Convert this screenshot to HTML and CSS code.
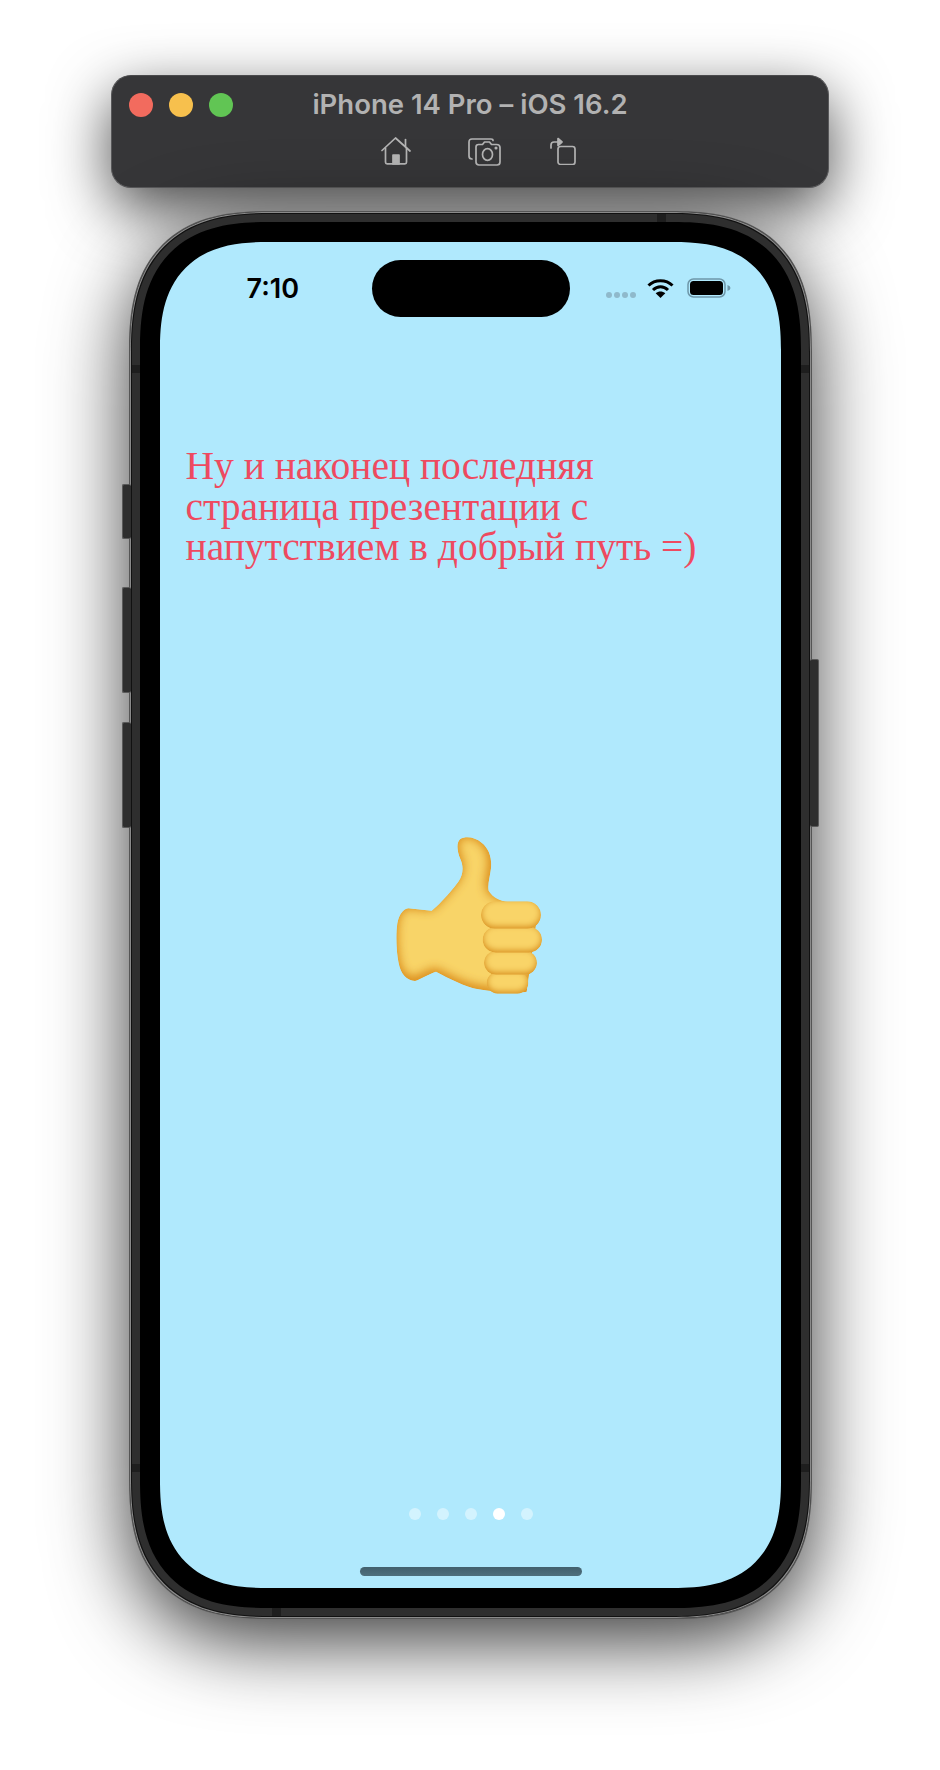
FILE: index.html
```html
<!DOCTYPE html>
<html lang="ru">
<head>
<meta charset="utf-8">
<title>iPhone 14 Pro – iOS 16.2</title>
<link rel="stylesheet" href="styles.css">
</head>
<body>
<div class="page">
  <header class="bar">
    <div class="bar-head">
      <div class="lights"><i class="light red"></i><i class="light yellow"></i><i class="light green"></i></div>
      <div class="bar-title">iPhone 14 Pro – iOS 16.2</div>
    </div>
    <div class="bar-tools">
      <svg class="tool-home" width="30" height="28" viewBox="0 0 30 28" fill="none" stroke="#b4b4b4" stroke-width="1.7" stroke-linecap="round" stroke-linejoin="round"><path d="M1 13.5 14.5 1 29 14"/><path d="M4.5 11v14.2q0 1.6 1.6 1.6h17.8q1.6 0 1.6-1.6V11"/><path d="M24.5 9.5V2.5"/><path d="M12 27v-9h6v9z" fill="#b4b4b4"/></svg>
      <svg class="tool-cam" width="33" height="28" viewBox="0 0 33 28" fill="none" stroke="#b4b4b4" stroke-width="1.7" stroke-linecap="round" stroke-linejoin="round"><path d="M25 2.5Q25 1 23 1H4Q1 1 1 4v14q0 3 3 3"/><path d="M8 9q0-2.500 2.500-2.500h4l2-2.500h5l2 2.500h5q3.500 0 3.500 3V24q0 3-3 3H11q-3 0-3-3z"/><ellipse cx="19.500" cy="16.500" rx="5" ry="5.800"/><circle cx="28" cy="10" r=".7" fill="#b4b4b4"/></svg>
      <svg class="tool-rot" width="26" height="28" viewBox="0 0 26 28" fill="none" stroke="#b4b4b4" stroke-width="1.7" stroke-linecap="round" stroke-linejoin="round"><rect x="8" y="9.500" width="17" height="18" rx="2.500"/><path d="M1 11V8q0-3 3-3h5"/><path d="M8 1.500 12 5l-4 3.500z" fill="#b4b4b4"/></svg>
    </div>
  </header>

  <div class="phone">
    <i class="btn btn-silent"></i>
    <i class="btn btn-up"></i>
    <i class="btn btn-down"></i>
    <i class="btn btn-power"></i>
    <i class="band band-top"></i>
    <i class="band band-bottom"></i>
    <i class="band band-lt"></i>
    <i class="band band-lb"></i>
    <i class="band band-rt"></i>
    <i class="band band-rb"></i>
    <div class="bezel">
      <main class="screen">
        <div class="island"></div>
        <div class="layer-top">
          <div class="status">
            <span class="time">7:10</span>
            <div class="status-right">
              <div class="signal"><i></i><i></i><i></i><i></i></div>
              <svg class="wifi" width="27" height="20" viewBox="0 0 27 20" fill="none" stroke="#000" stroke-width="3"><path d="M1.500 7.500C8 1 19 1 25.500 7.500"/><path d="M6 12c4.500-4.300 10.500-4.300 15 0"/><path d="M13.500 20 8.700 15.200c2.800-2.300 6.800-2.300 9.600 0z" fill="#000" stroke="none"/></svg>
              <svg class="battery" width="44" height="20" viewBox="0 0 44 20"><rect x="1" y="1" width="37" height="18" rx="5.500" fill="none" stroke="#6e97a9" stroke-width="1.500"/><rect x="3" y="3" width="33" height="14" rx="3.500" fill="#000"/><path d="M40.500 7q3 .8 3 3t-3 3z" fill="#6e97a9"/></svg>
            </div>
          </div>
          <h1 class="headline">Ну и наконец последняя страница презентации с напутствием в добрый путь =)</h1>
        </div>

        <svg class="thumb" width="180" height="180" viewBox="0 0 540 540">
          <defs>
            <filter id="shadeBig" x="-10%" y="-10%" width="120%" height="120%" color-interpolation-filters="sRGB">
              <feGaussianBlur in="SourceAlpha" stdDeviation="16"/>
              <feOffset dx="-2" dy="-7" result="soft"/>
              <feComposite in="SourceAlpha" in2="soft" operator="out" result="edge"/>
              <feFlood flood-color="#dd9322"/>
              <feComposite in2="edge" operator="in" result="tint"/>
              <feMerge result="all"><feMergeNode in="SourceGraphic"/><feMergeNode in="tint"/><feMergeNode in="tint"/></feMerge>
              <feComposite in="all" in2="SourceAlpha" operator="in"/>
            </filter>
            <filter id="shadeFinger" x="-10%" y="-20%" width="120%" height="140%" color-interpolation-filters="sRGB">
              <feGaussianBlur in="SourceAlpha" stdDeviation="10"/>
              <feOffset dy="-7" result="soft"/>
              <feComposite in="SourceAlpha" in2="soft" operator="out" result="edge"/>
              <feFlood flood-color="#d58a1a"/>
              <feComposite in2="edge" operator="in" result="tint"/>
              <feMerge result="all"><feMergeNode in="SourceGraphic"/><feMergeNode in="tint"/></feMerge>
              <feComposite in="all" in2="SourceAlpha" operator="in"/>
            </filter>
          </defs>
          <path filter="url(#shadeBig)" fill="#f8d468" d="M85 265 155 272C168 262 205 225 235 185 252 160 250 135 240 115 232 95 228 70 240 58 258 47 285 52 305 68 328 86 336 115 333 145 330 170 322 195 326 212 338 232 360 242 385 246L470 300 440 515C400 522 340 515 295 508 255 500 205 475 168 455 145 462 125 477 105 483 80 482 62 462 56 430 49 395 47 345 52 310 57 285 68 268 85 265Z"/>
          <rect filter="url(#shadeFinger)" fill="#f9d468" x="320" y="456" width="125" height="65" rx="32"/>
          <rect filter="url(#shadeFinger)" fill="#f9d468" x="312" y="392" width="159" height="72" rx="36"/>
          <rect filter="url(#shadeFinger)" fill="#f9d468" x="308" y="320" width="178" height="78" rx="39"/>
          <rect filter="url(#shadeFinger)" fill="#f9d468" x="303" y="244" width="180" height="82" rx="41"/>
        </svg>

        <div class="layer-bottom">
          <div class="dots"><i></i><i></i><i></i><i class="on"></i><i></i></div>
          <div class="home-bar"></div>
        </div>
      </main>
    </div>
  </div>
</div>
</body>
</html>
```

FILE: styles.css
```css
* { box-sizing: border-box; }
html { margin: 0; background: #fff; }
body { margin: 0; }
.page {
  width: 940px;
  height: 1770px;
  overflow: hidden;
  padding-top: 75px;
  display: flex;
  flex-direction: column;
  align-items: center;
  font-family: Inter, "Liberation Sans", sans-serif;
}

/* simulator window bar */
.bar {
  position: relative;
  width: 718px;
  height: 113px;
  padding: 12px 17px 0;
  background: #363638;
  border-radius: 20px;
  border: 1px solid #58585a;
  border-top-color: #4a4a4c;
  box-shadow: 0 20px 60px rgba(0, 0, 0, .72);
}
.bar-head {
  display: grid;
  grid-template-columns: 1fr auto 1fr;
  align-items: center;
  height: 32px;
}
.lights { display: flex; gap: 16px; }
.light { width: 24px; height: 24px; border-radius: 50%; }
.red { background: #f26b5e; }
.yellow { background: #f7c04d; }
.green { background: #61c554; }
.bar-title {
  margin-top: -1px;
  font-size: 27.5px;
  font-weight: 600;
  color: #b2b2b2;
  white-space: nowrap;
}
.bar-tools {
  display: flex;
  justify-content: center;
  align-items: flex-start;
  margin-top: 17px;
  padding-left: 17px;
  gap: 57px;
}
.tool-cam { margin-top: 1px; }
.tool-rot { margin-left: -8px; }

/* device */
.phone {
  position: relative;
  margin-top: 24px;
  width: 681px;
  height: 1406px;
  padding: 10px;
  background: #2e2e2e;
  border-radius: 140px;
  corner-shape: superellipse(1.35);
  box-shadow:
    0 0 0 1px #8a8a8a inset,
    0 0 0 2px #111 inset,
    0 0 0 1px #555,
    0 22px 80px 0 rgba(0, 0, 0, .8);
}
.btn {
  position: absolute;
  width: 9px;
  background: #2e2e2e;
  border: 1px solid #5a5a5a;
  border-radius: 2px;
}
.btn-silent { left: -8px; top: 272px; height: 55px; border-right: 0; }
.btn-up { left: -8px; top: 375px; height: 106px; border-right: 0; }
.btn-down { left: -8px; top: 510px; height: 106px; border-right: 0; }
.btn-power { right: -8px; top: 447px; height: 168px; border-left: 0; }
.band { position: absolute; background: #1e1e1e; }
.band-top { left: 527px; top: 2px; width: 9px; height: 8px; }
.band-bottom { left: 142px; bottom: 2px; width: 9px; height: 8px; }
.band-lt { left: 2px; top: 153px; width: 8px; height: 8px; }
.band-lb { left: 2px; top: 1252px; width: 8px; height: 8px; }
.band-rt { right: 2px; top: 153px; width: 8px; height: 8px; }
.band-rb { right: 2px; top: 1252px; width: 8px; height: 8px; }
.bezel {
  position: relative;
  height: 100%;
  padding: 20px;
  background: #000;
  border-radius: 128px;
  corner-shape: superellipse(1.35);
}
.screen {
  position: relative;
  height: 100%;
  display: grid;
  grid-template: 1fr / 1fr;
  background: #b0e9fd;
  border-radius: 108px;
  corner-shape: superellipse(1.35);
  overflow: hidden;
}
.screen > .layer-top, .screen > .thumb, .screen > .layer-bottom { grid-area: 1 / 1; }
.island {
  position: absolute;
  left: 212px;
  top: 18px;
  width: 198px;
  height: 57px;
  background: #000;
  border-radius: 29px;
  z-index: 1;
}
.layer-top { align-self: start; }
.status {
  display: flex;
  justify-content: space-between;
  align-items: center;
  height: 36px;
  margin-top: 28px;
  padding: 0 50px 0 87px;
}
.time {
  font-size: 27px;
  font-weight: 600;
  color: #000;
}
.status-right { display: flex; align-items: center; }
.signal { display: flex; gap: 2px; margin: 14px 11px 0 0; }
.signal i { width: 6px; height: 6px; border-radius: 50%; background: #8fb9cb; }
.wifi { margin-right: 13px; }
.headline {
  margin: 140px 0 0;
  padding-left: 26px;
  width: 580px;
  font-family: "Liberation Serif", serif;
  font-size: 39.5px;
  font-weight: 400;
  line-height: 40.5px;
  color: #ee4a60;
}
.thumb { place-self: center; margin-bottom: 10px; }
.layer-bottom {
  align-self: end;
  display: flex;
  flex-direction: column;
  align-items: center;
  padding-left: 1px;
}
.dots { display: flex; gap: 16px; margin-bottom: 47px; }
.dots i { width: 12px; height: 12px; border-radius: 50%; background: rgba(255, 255, 255, .45); }
.dots i.on { background: #fff; }
.home-bar {
  width: 222px;
  height: 9px;
  margin-bottom: 12px;
  border-radius: 5px;
  background: linear-gradient(#42606d, #4f6f7d);
}
```
